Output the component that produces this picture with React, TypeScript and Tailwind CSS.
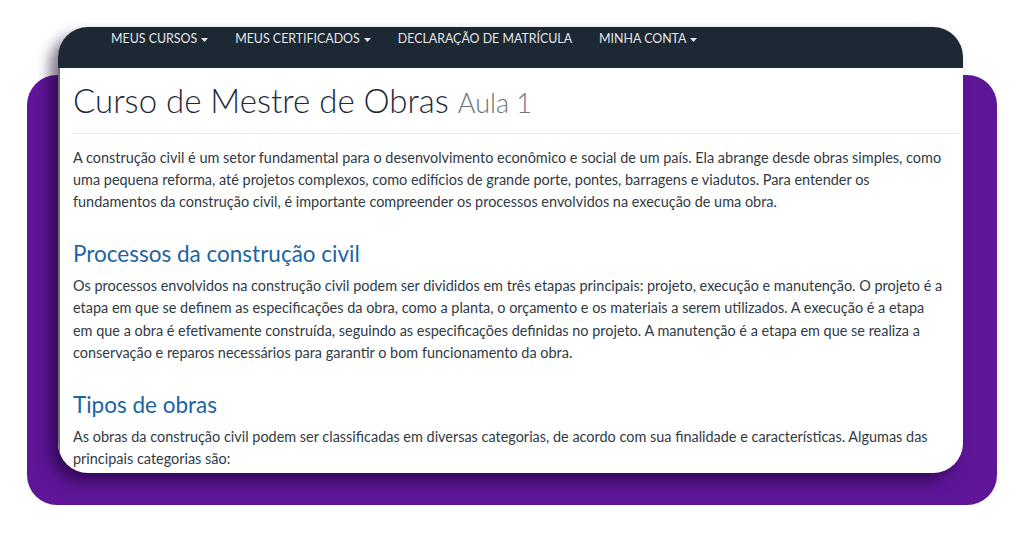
import React from 'react'

const NAV = [
  { label: 'Meus Cursos', caret: true },
  { label: 'Meus Certificados', caret: true },
  { label: 'Declaração de Matrícula', caret: false },
  { label: 'Minha Conta', caret: true },
]

const Caret = () => (
  <svg width="7" height="4" viewBox="0 0 7 4" className="ml-[4px] mt-[1px]">
    <path d="M0 0h7L3.5 4z" fill="currentColor" />
  </svg>
)

const App: React.FC = () => {
  return (
    <div
      className="relative w-[1024px] h-[536px] bg-white overflow-hidden"
      style={{ fontFamily: 'Lato, "Open Sans", sans-serif' }}
    >
      {/* purple backdrop */}
      <div className="ml-[27px] mt-[75px] w-[970px] h-[430px] rounded-[30px] bg-[#5f1598]" />

      {/* browser card */}
      <div className="absolute left-[58px] top-[27px] w-[905px] h-[446px] rounded-[30px] overflow-hidden bg-white shadow-[-8px_8px_14px_rgba(20,0,40,0.55)] flex flex-col">
        <nav className="h-[41px] shrink-0 bg-[#1c2833] flex items-start pt-[3px] pl-[53px] gap-[27px]">
          {NAV.map(n => (
            <span key={n.label} className="flex items-center text-[12.4px] leading-[18px] uppercase text-[#e4e6e8]">
              {n.label}
              {n.caret && <Caret />}
            </span>
          ))}
        </nav>

        <div className="flex-1 border-l-2 border-[#707070] pl-[13px] pr-[2px] text-[#2f3a45]">
          <h1 className="mt-[13px] text-[33px] leading-[38px] font-light text-[#1e2a3a]">
            Curso de Mestre de Obras <span className="text-[27px] text-[#6c757d]">Aula 1</span>
          </h1>
          <hr className="mt-[11px] mr-[3px] border-[#e6e6e6]" />

          <p className="mt-[13px] text-[14.45px] leading-[22px]">
            A construção civil é um setor fundamental para o desenvolvimento econômico e social de um país. Ela abrange desde obras simples, como<br />
            uma pequena reforma, até projetos complexos, como edifícios de grande porte, pontes, barragens e viadutos. Para entender os<br />
            fundamentos da construção civil, é importante compreender os processos envolvidos na execução de uma obra.
          </p>

          <h2 className="mt-[26px] text-[22.5px] leading-[29px] text-[#1b64a5]">Processos da construção civil</h2>
          <p className="mt-[7px] text-[14.45px] leading-[22.3px]">
            Os processos envolvidos na construção civil podem ser divididos em três etapas principais: projeto, execução e manutenção. O projeto é a<br />
            etapa em que se definem as especificações da obra, como a planta, o orçamento e os materiais a serem utilizados. A execução é a etapa<br />
            em que a obra é efetivamente construída, seguindo as especificações definidas no projeto. A manutenção é a etapa em que se realiza a<br />
            conservação e reparos necessários para garantir o bom funcionamento da obra.
          </p>

          <h2 className="mt-[26px] text-[22.5px] leading-[29px] text-[#1b64a5]">Tipos de obras</h2>
          <p className="mt-[7px] text-[14.45px] leading-[22px]">
            As obras da construção civil podem ser classificadas em diversas categorias, de acordo com sua finalidade e características. Algumas das<br />
            principais categorias são:
          </p>
        </div>
      </div>
    </div>
  )
}

export default App
